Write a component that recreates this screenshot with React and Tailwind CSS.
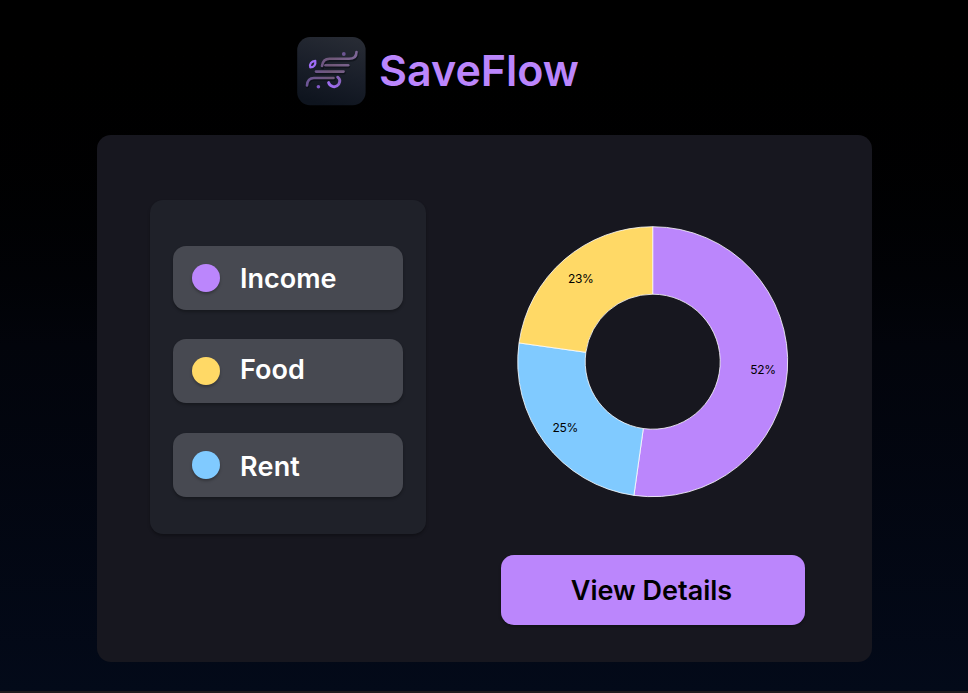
const SHADOW = "shadow-[0_2px_3px_rgba(0,0,0,0.28)]";

const CATEGORIES = [
  { label: "Income", dot: "bg-[#bb86fc]", row: "", text: "mt-px" },
  { label: "Food", dot: "bg-[#ffd966]", row: "mt-[29px]", text: "-mt-[2px]" },
  { label: "Rent", dot: "bg-[#80caff]", row: "mt-[30px]", text: "mt-[3px] tracking-[0.2px]" },
];

const SLICES = [
  { label: "52%", from: 0, to: 188, color: "#bb86fc", x: 762.9, y: 374.1 },
  { label: "25%", from: 188, to: 278, color: "#80caff", x: 565.2, y: 432 },
  { label: "23%", from: 278, to: 360, color: "#ffd966", x: 580.8, y: 283 },
];

const CX = 652.7;
const CY = 361.7;

function point(radius, degrees) {
  const a = (degrees * Math.PI) / 180;
  return `${CX + radius * Math.sin(a)} ${CY - radius * Math.cos(a)}`;
}

function slicePath({ from, to }) {
  const outer = 135;
  const inner = 67.5;
  const large = to - from > 180 ? 1 : 0;
  return `M${point(outer, from)} A${outer} ${outer} 0 ${large} 1 ${point(outer, to)} L${point(inner, to)} A${inner} ${inner} 0 ${large} 0 ${point(inner, from)} Z`;
}

function Logo() {
  return (
    <svg className="block h-[69px] w-[69px]" viewBox="0 0 69 69" fill="none">
      <defs>
        <linearGradient id="tile" x1="0.7" y1="0" x2="0.4" y2="1">
          <stop offset="0" stopColor="#272b34" />
          <stop offset="0.5" stopColor="#1a1f2a" />
          <stop offset="1" stopColor="#0e141e" />
        </linearGradient>
        <linearGradient id="wing" gradientUnits="userSpaceOnUse" x1="9" y1="0" x2="60" y2="0">
          <stop offset="0" stopColor="#6c5596" />
          <stop offset="0.5" stopColor="#705878" />
          <stop offset="1" stopColor="#7d6696" />
        </linearGradient>
        <linearGradient id="curl" x1="0" y1="1" x2="1" y2="0">
          <stop offset="0" stopColor="#a26ffa" />
          <stop offset="1" stopColor="#8560b5" />
        </linearGradient>
      </defs>
      <rect x="0.2" y="0.1" width="68.4" height="68.2" rx="13" fill="url(#tile)" />
      <g stroke="#080b12" strokeWidth="3.4" strokeLinecap="round" opacity="0.55" transform="translate(0.5 1)">
        <path d="M25 29.5C25.6 24.5 28 22 32.5 22H52C57 22 59.5 20 59.5 15.5" />
        <path d="M28.5 28.5H51" />
        <path d="M19 34.7H46.5" />
        <path d="M10 48.5C10.3 43.5 12.5 41 17 41H36.5" />
      </g>
      <g stroke="url(#wing)" strokeWidth="2.6" strokeLinecap="round">
        <path d="M25 29C25.6 24.5 28 21.8 32.5 21.8H52C57 21.8 59.5 19.5 59.5 15" />
        <path d="M28.5 28.3H51.2" />
        <path d="M19 34.6H46.5" />
        <path d="M10 48.5C10.3 43.5 12.5 41 17 41H36.5" />
      </g>
      <path d="M31.6 45.6C33 50 39 51.3 41.7 47.3C43.6 44.3 42.6 41.7 40.7 40.2" stroke="url(#curl)" strokeWidth="2.9" strokeLinecap="round" />
      <path d="M13.3 30.4C12.2 26.7 14.5 24.1 18.3 23.8C19 27.7 16.9 30.4 13.3 30.4Z" stroke="#9f6df6" strokeWidth="2.2" strokeLinejoin="round" />
      <circle cx="46.8" cy="17" r="1.9" fill="#6c5592" />
      <circle cx="21.4" cy="49.7" r="1.8" fill="#8058c6" />
    </svg>
  );
}

function DonutChart() {
  return (
    <svg className="block h-[272px] w-[272px]" viewBox="517 226 272 272">
      {SLICES.map((slice) => (
        <path key={slice.label} d={slicePath(slice)} fill={slice.color} stroke="#fff" strokeWidth="0.8" />
      ))}
      {SLICES.map((slice) => (
        <text key={slice.label} x={slice.x} y={slice.y} textAnchor="middle" className="text-[12px] tracking-[-0.3px]" fill="#000">
          {slice.label}
        </text>
      ))}
    </svg>
  );
}

export default function App() {
  return (
    <div className="flex h-[693px] w-[968px] flex-col overflow-hidden border-b-2 border-[#1d1b1e] bg-linear-to-b from-black via-[#02040b] to-[#030a19] font-['Inter',sans-serif]">
      <header className="flex h-[135px] shrink-0 pt-[37px] pl-[297px]">
        <Logo />
        <h1 className="mt-[6px] ml-[13px] text-[43px] leading-[54px] font-semibold text-[#bb86fc]">SaveFlow</h1>
      </header>
      <main className="ml-[97px] flex h-[527px] w-[775px] shrink-0 justify-between rounded-[14px] bg-[#17171f] pt-[65px] pr-[67px] pl-[53px]">
        <ul className={`flex h-[334px] w-[276px] flex-col rounded-[13px] bg-[#1f2129] px-[23px] pt-[46px] ${SHADOW}`}>
          {CATEGORIES.map((c) => (
            <li key={c.label} className={`flex h-16 w-[230px] shrink-0 items-center gap-5 rounded-[13px] bg-[#474951] pl-[19px] ${SHADOW} ${c.row}`}>
              <span className={`size-7 rounded-full ${SHADOW} ${c.dot}`} />
              <span className={`text-[27px] leading-8 font-semibold text-white ${c.text}`}>{c.label}</span>
            </li>
          ))}
        </ul>
        <section className="flex w-[304px] flex-col items-center pt-[26px]">
          <DonutChart />
          <button className={`mt-[57px] h-[70px] w-[304px] rounded-[13px] bg-[#bb86fc] pt-[2px] pr-[3px] text-[27px] font-semibold text-black ${SHADOW}`}>
            View Details
          </button>
        </section>
      </main>
    </div>
  );
}
